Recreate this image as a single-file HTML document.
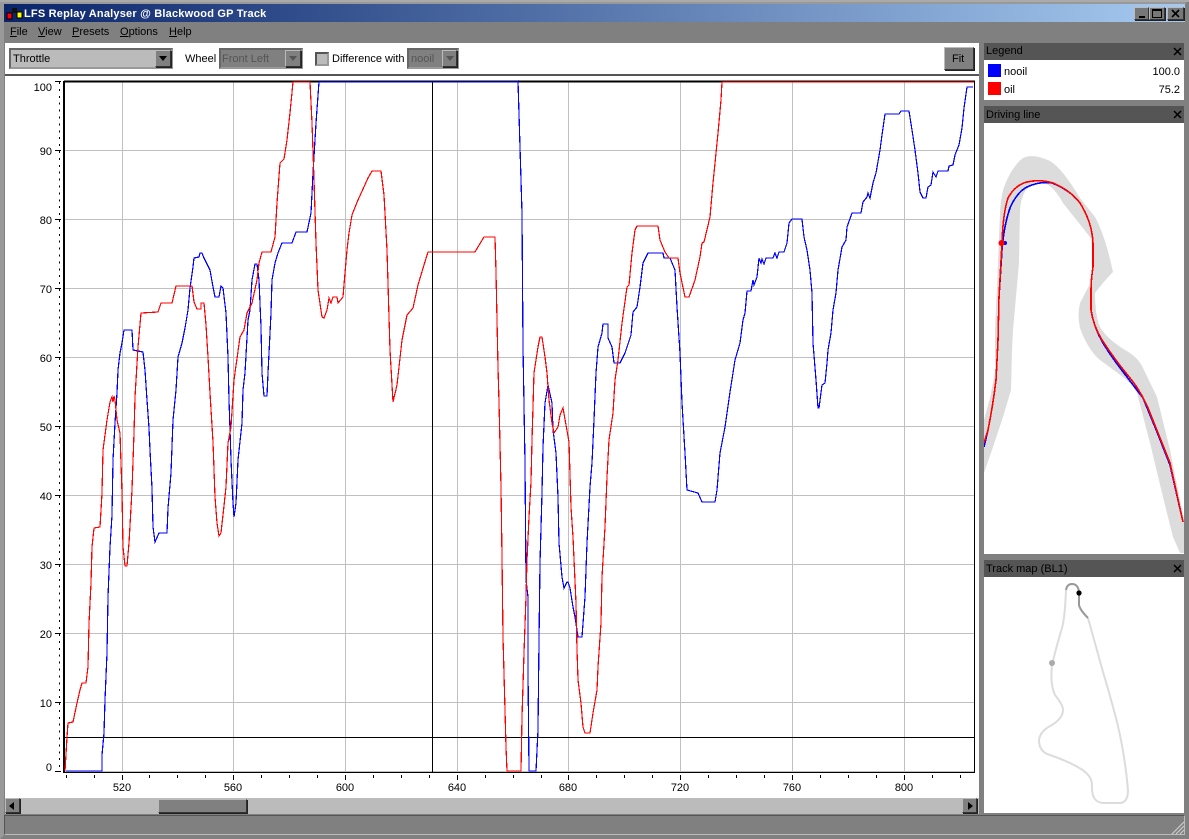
<!DOCTYPE html>
<html><head><meta charset="utf-8"><style>
*{box-sizing:border-box}
html,body{margin:0;padding:0;width:1189px;height:839px;overflow:hidden;background:#808080;font:11px "Liberation Sans",sans-serif;color:#000}
div{position:absolute}
.t{white-space:nowrap;line-height:13px}
u{text-decoration:underline}
.btn{background:#808080;border:1px solid;border-color:#bbb #333 #333 #bbb;box-shadow:1px 1px 0 #222}
.ph{background:#555;height:17px;left:984px;width:200px}
.ph span{position:absolute;left:2px;top:2px;line-height:13px;white-space:nowrap}
.x{position:absolute;left:189px;top:4px}
svg{position:absolute;left:0;top:0}
</style></head><body>
<div style="left:0;top:0;width:1189px;height:839px;border:4px solid #808080;border-top-color:#999;border-left-color:#999"></div>
<div style="left:0;top:0;width:1189px;height:2px;background:#aaa"></div>
<div style="left:4px;top:4px;width:1181px;height:18px;background:linear-gradient(90deg,#0a246a,#a6caf0)"></div>
<svg width="20" height="20" style="left:5px;top:7px"><rect x="2" y="6" width="5" height="6" fill="#f00" stroke="#000"/><rect x="7" y="1" width="5" height="5" fill="#111"/><rect x="12" y="5" width="5" height="6" fill="#ff0" stroke="#000"/></svg>
<div class="t" style="left:24px;top:8px;color:#fff;font-weight:bold;letter-spacing:.2px">LFS Replay Analyser @ Blackwood GP Track</div>
<div class="btn" style="left:1134px;top:7px;width:15px;height:13px;background:#777"><div style="left:4px;top:8px;width:6px;height:2px;background:#000"></div></div>
<div class="btn" style="left:1149px;top:7px;width:16px;height:13px;background:#777"><div style="left:2px;top:1px;width:10px;height:9px;border:1px solid #000;border-top-width:2px"></div></div>
<div class="btn" style="left:1167px;top:7px;width:17px;height:13px;background:#777"><svg width="15" height="11"><path d="M4 2L11 9M11 2L4 9" stroke="#000" stroke-width="1.6"/></svg></div>
<div class="t" style="left:10px;top:26px"><u>F</u>ile</div>
<div class="t" style="left:38px;top:26px"><u>V</u>iew</div>
<div class="t" style="left:72px;top:26px"><u>P</u>resets</div>
<div class="t" style="left:120px;top:26px"><u>O</u>ptions</div>
<div class="t" style="left:169px;top:26px"><u>H</u>elp</div>

<div style="left:5px;top:43px;width:974px;height:31px;background:#fff"></div>
<div style="left:5px;top:74px;width:974px;height:2px;background:#555"></div>
<div style="left:5px;top:76px;width:974px;height:722px;background:#fff"></div>

<div style="left:9px;top:48px;width:164px;height:21px;background:#bbb;border:2px solid #666;border-bottom-color:#999;border-right-color:#999"></div>
<div class="t" style="left:13px;top:53px">Throttle</div>
<div class="btn" style="left:155px;top:50px;width:16px;height:17px"><div style="left:3px;top:5px;border:4px solid transparent;border-top:5px solid #000;border-bottom:0"></div></div>
<div class="t" style="left:185px;top:53px">Wheel</div>
<div style="left:219px;top:48px;width:84px;height:21px;background:#808080;border:2px solid #666;border-bottom-color:#999;border-right-color:#999"></div>
<div class="t" style="left:222px;top:53px;color:#555">Front Left</div>
<div class="btn" style="left:285px;top:50px;width:16px;height:17px"><div style="left:3px;top:5px;border:4px solid transparent;border-top:5px solid #555;border-bottom:0"></div></div>
<div style="left:315px;top:52px;width:14px;height:14px;background:#bbb;border:2px solid #555;border-bottom-color:#999;border-right-color:#999"></div>
<div class="t" style="left:332px;top:53px">Difference with</div>
<div style="left:407px;top:48px;width:52px;height:21px;background:#808080;border:2px solid #666;border-bottom-color:#999;border-right-color:#999"></div>
<div class="t" style="left:411px;top:53px;color:#555">nooil</div>
<div class="btn" style="left:442px;top:50px;width:15px;height:17px"><div style="left:3px;top:5px;border:4px solid transparent;border-top:5px solid #555;border-bottom:0"></div></div>
<div class="btn" style="left:944px;top:47px;width:30px;height:23px"></div>
<div class="t" style="left:952px;top:53px">Fit</div>

<svg width="1189" height="839" style="left:0;top:0">
<g shape-rendering="crispEdges" stroke="#c0c0c0" fill="none">
<path d="M122.5 82V771M233.5 82V771M345.5 82V771M457.5 82V771M568.5 82V771M680.5 82V771M792.5 82V771M904.5 82V771"/>
<path d="M64 150.5H974M64 219.5H974M64 288.5H974M64 357.5H974M64 426.5H974M64 495.5H974M64 564.5H974M64 633.5H974M64 702.5H974M64 771.5H974"/>
<path stroke="#000" d="M59.5 82V772" stroke-dasharray="2 4.9" />
<path stroke="#000" d="M55 81.5H61M55 150.5H61M55 219.5H61M55 288.5H61M55 357.5H61M55 426.5H61M55 495.5H61M55 564.5H61M55 633.5H61M55 702.5H61M55 771.5H61"/>
<path stroke="#000" d="M66.5 775V778M94.5 775V778M149.5 775V778M177.5 775V778M205.5 775V778M261.5 775V778M289.5 775V778M317.5 775V778M373.5 775V778M401.5 775V778M429.5 775V778M485.5 775V778M513.5 775V778M541.5 775V778M596.5 775V778M624.5 775V778M652.5 775V778M708.5 775V778M736.5 775V778M764.5 775V778M820.5 775V778M848.5 775V778M876.5 775V778M932.5 775V778M960.5 775V778"/>
<path stroke="#000" d="M122.5 775V780M233.5 775V780M345.5 775V780M457.5 775V780M568.5 775V780M680.5 775V780M792.5 775V780M904.5 775V780"/>
<path stroke="#000" stroke-width="2" d="M64 81V773M64 81.5H975"/>
<path stroke="#000" d="M974.5 81V773M64 772.5H975"/>
<path stroke="#000" d="M64 737.5H974M432.5 81V772"/>
</g>
<polyline fill="none" shape-rendering="crispEdges" stroke="#00f" stroke-width="1.2" points="66,771 102,771 102,755 104,733 105,700 107,653 108,597 110,547 112,515 113,460 115,423 117,393 118,370 120,353 122,343 124,330 132,330 133,350 143,352 145,370 147,400 149,428 150,450 152,488 153,527 155,542 159,533 167,533 168,508 171,473 173,420 176,390 178,357 182,343 185,328 188,310 190,288 193,267 194,258 199,257 200,253 202,253 204,258 210,270 213,287 215,297 219,297 221,286 223,288 226,313 228,357 229,400 231,460 233,503 234,517 236,503 238,460 242,423 243,390 245,373 248,320 250,310 252,280 255,264 257,264 259,280 261,327 262,373 264,396 267,396 268,373 271,313 272,280 275,263 278,253 282,243 292,243 296,232 307,232 311,213 313,173 316,123 319,82 517,82 518,81 520,147 522,213 523,347 525,463 526,580 528,597 528,670 529,771 536,771 538,730 539,640 540,563 542,493 543,447 545,403 548,385 552,403 553,430 556,453 558,497 559,543 562,577 564,588 567,582 568,582 570,588 573,607 575,617 578,637 582,637 585,597 587,543 590,487 592,463 594,420 596,373 598,347 602,333 603,324 608,324 608,338 612,347 614,363 620,363 625,353 631,335 633,312 637,307 640,287 643,263 648,253 663,253 664,258 670,258 675,270 677,307 680,353 682,403 685,453 687,490 698,493 702,502 715,502 717,490 720,453 725,427 727,413 730,392 733,373 735,360 740,343 743,320 745,313 747,291 751,291 753,280 754,285 757,277 759,258 761,263 762,259 764,264 766,258 773,258 775,253 777,258 779,252 784,252 787,243 789,223 792,219 802,219 804,237 807,250 810,270 812,293 813,343 816,380 818,408 819,408 822,385 825,383 827,363 828,350 831,333 833,310 836,293 838,270 842,247 846,240 847,227 852,213 861,213 863,202 867,197 868,193 870,198 873,183 876,173 880,150 882,135 885,114 899,114 901,111 909,111 912,130 915,150 918,173 920,192 923,198 926,198 928,187 931,185 933,172 936,177 938,171 948,171 949,166 953,165 955,155 959,145 962,128 964,108 967,87 973,87"/>
<polyline fill="none" shape-rendering="crispEdges" stroke="#f00" stroke-width="1.2" points="65,771 67,737 68,723 73,722 77,703 80,690 82,683 86,683 88,667 89,623 91,583 92,547 94,528 100,527 102,493 103,450 107,420 110,402 112,397 113,402 114,396 115,400 117,420 120,433 122,493 123,547 125,566 127,566 129,543 132,490 134,433 135,397 138,347 141,313 158,312 161,303 172,303 176,286 192,286 194,302 197,309 201,309 201,303 204,303 206,325 208,357 210,393 213,442 215,497 217,523 219,536 221,533 223,515 226,487 228,443 231,427 234,380 240,337 244,330 247,313 252,303 257,280 259,263 262,252 271,252 275,237 277,203 280,163 284,159 287,140 290,113 293,82 310,82 312,123 314,180 316,243 318,290 322,317 324,318 327,310 329,298 331,303 333,297 337,297 338,303 343,297 345,273 347,250 349,233 352,215 358,200 368,178 372,171 381,171 384,195 387,250 390,350 393,402 397,385 402,340 407,315 413,308 418,285 424,265 428,252 475,252 484,237 495,237 496,272 497,320 498,367 499,402 501,487 502,557 503,637 505,710 506,747 507,771 521,771 522,717 524,653 526,597 527,560 529,517 531,482 532,440 534,373 538,347 540,337 542,337 545,357 547,373 549,400 552,423 554,433 558,427 560,415 563,408 566,425 569,442 571,507 573,537 576,603 577,650 578,680 581,703 583,727 585,733 590,733 593,713 597,690 598,667 601,623 602,577 605,527 607,477 609,440 613,413 615,380 618,360 622,323 627,287 629,285 632,253 635,230 637,226 658,226 660,240 665,252 669,258 678,258 680,273 685,297 689,297 695,280 700,257 702,243 704,242 710,217 713,183 718,133 721,100 722,82 974,82"/>
<g font-family="Liberation Sans,sans-serif" font-size="11" fill="#000">
<g text-anchor="end"><text x="52" y="91">100</text><text x="52" y="155">90</text><text x="52" y="224">80</text><text x="52" y="293">70</text><text x="52" y="362">60</text><text x="52" y="431">50</text><text x="52" y="500">40</text><text x="52" y="569">30</text><text x="52" y="638">20</text><text x="52" y="707">10</text><text x="52" y="771">0</text></g>
<g text-anchor="middle"><text x="122" y="791">520</text><text x="233" y="791">560</text><text x="345" y="791">600</text><text x="457" y="791">640</text><text x="568" y="791">680</text><text x="680" y="791">720</text><text x="792" y="791">760</text><text x="904" y="791">800</text></g>
</g>
</svg>

<div style="left:5px;top:798px;width:974px;height:16px;background:#bbb"></div>
<div class="btn" style="left:5px;top:798px;width:15px;height:15px"><div style="left:3px;top:3px;border:4px solid transparent;border-right:5px solid #000;border-left:0"></div></div>
<div class="btn" style="left:158px;top:799px;width:89px;height:14px"></div>
<div class="btn" style="left:962px;top:798px;width:15px;height:15px"><div style="left:5px;top:3px;border:4px solid transparent;border-left:5px solid #000;border-right:0"></div></div>
<div style="left:4px;top:815px;width:1181px;height:20px;border:1px solid;border-color:#555 #bbb #bbb #555;background:#808080"></div>
<svg width="14" height="14" style="left:1171px;top:821px"><path d="M13 1L1 13M13 5L5 13M13 9L9 13" stroke="#ccc" stroke-width="1.2"/></svg>

<div class="ph" style="top:43px"><span>Legend</span><svg class="x" width="9" height="9"><path d="M1 1L8 8M8 1L1 8" stroke="#000" stroke-width="1.5"/></svg></div>
<div style="left:984px;top:60px;width:200px;height:40px;background:#fff"></div>
<div style="left:988px;top:64px;width:13px;height:13px;background:#00f"></div>
<div style="left:988px;top:82px;width:13px;height:13px;background:#f00"></div>
<div class="t" style="left:1004px;top:66px">nooil</div>
<div class="t" style="left:1004px;top:84px">oil</div>
<div class="t" style="left:1130px;width:50px;text-align:right;top:66px">100.0</div>
<div class="t" style="left:1130px;width:50px;text-align:right;top:84px">75.2</div>

<div class="ph" style="top:106px"><span style="top:3px">Driving line</span><svg class="x" width="9" height="9"><path d="M1 1L8 8M8 1L1 8" stroke="#000" stroke-width="1.5"/></svg></div>
<div style="left:984px;top:123px;width:200px;height:431px;background:#fff;overflow:hidden">
<svg width="200" height="431" viewBox="984 123 200 431">
<path fill="#dcdcdc" d="M984,420 L990,398 L995,373 L995,330 L997,287 L1000,213 Q1001,196 1004,187 Q1012,166 1023,158 Q1033,153 1050,161 Q1062,168 1080,198 L1095,217 Q1105,235 1113,272 Q1105,280 1095,293 Q1095,315 1100,327 Q1106,338 1125,350 Q1138,357 1143,368 L1157,397 L1170,450 L1184,520 L1184,553 L1180,553 L1173,537 L1163,497 L1150,443 L1137,393 Q1133,385 1123,377 L1100,360 Q1088,350 1080,328 Q1077,315 1080,303 L1092,280 Q1097,260 1090,237 L1063,203 Q1052,183 1040,182 Q1022,184 1020,210 L1019,263 L1013,330 L1012,350 L1011,390 L1003,417 L993,447 L984,473 Z"/>
<path fill="none" shape-rendering="crispEdges" stroke="#00f" stroke-width="1.6" d="M984,447 L988,430 Q993,405 996,380 L998,340 L999,297 L1002,250 Q1004,225 1010,208 Q1017,192 1027,187 Q1040,181 1052,183 Q1070,190 1080,203 Q1092,222 1093,243 L1093,267 Q1091,280 1091,290 L1091,310 Q1094,328 1103,343 Q1112,358 1127,377 L1143,398 L1157,432 L1170,465 L1183,522"/>
<path fill="none" shape-rendering="crispEdges" stroke="#f00" stroke-width="1.6" d="M984,443 L988,430 Q993,405 996,380 L998,340 L999,297 L1002,243 Q1003,213 1008,198 Q1015,185 1027,182 Q1040,179 1053,183 Q1070,190 1080,203 Q1092,222 1093,243 L1093,267 Q1091,280 1091,290 L1091,310 Q1093,325 1102,340 Q1115,360 1130,378 Q1140,390 1148,408 L1170,463 L1183,522"/>
<circle cx="1005" cy="243" r="2" fill="#00f"/><circle cx="1001.5" cy="243" r="3" fill="#f00"/>
</svg></div>

<div class="ph" style="top:560px"><span style="top:3px">Track map (BL1)</span><svg class="x" width="9" height="9"><path d="M1 1L8 8M8 1L1 8" stroke="#000" stroke-width="1.5"/></svg></div>
<div style="left:984px;top:577px;width:200px;height:236px;background:#fff"></div>
<svg width="1189" height="839" style="left:0;top:0">
<path fill="none" stroke="#dcdcdc" stroke-width="2" d="M1066,590 Q1065,617 1062,628 Q1056,648 1052,665 Q1050,685 1055,695 Q1063,705 1063,710 Q1063,718 1052,725 Q1040,731 1039,740 Q1039,752 1050,755 Q1070,762 1081,769 Q1092,776 1092,785 Q1091,803 1104,803 L1118,803 Q1128,804 1128,790 Q1125,755 1117,722 Q1110,695 1103,672 L1088,618"/>
<path fill="none" stroke="#999" stroke-width="2" d="M1066,590 Q1067,584 1072,584 Q1078,584 1079,592 L1079,605 Q1080,610 1088,618"/>
<circle cx="1052" cy="663" r="3" fill="#aaa"/>
<circle cx="1079" cy="593" r="2.6" fill="#000"/>
</svg>
</body></html>
